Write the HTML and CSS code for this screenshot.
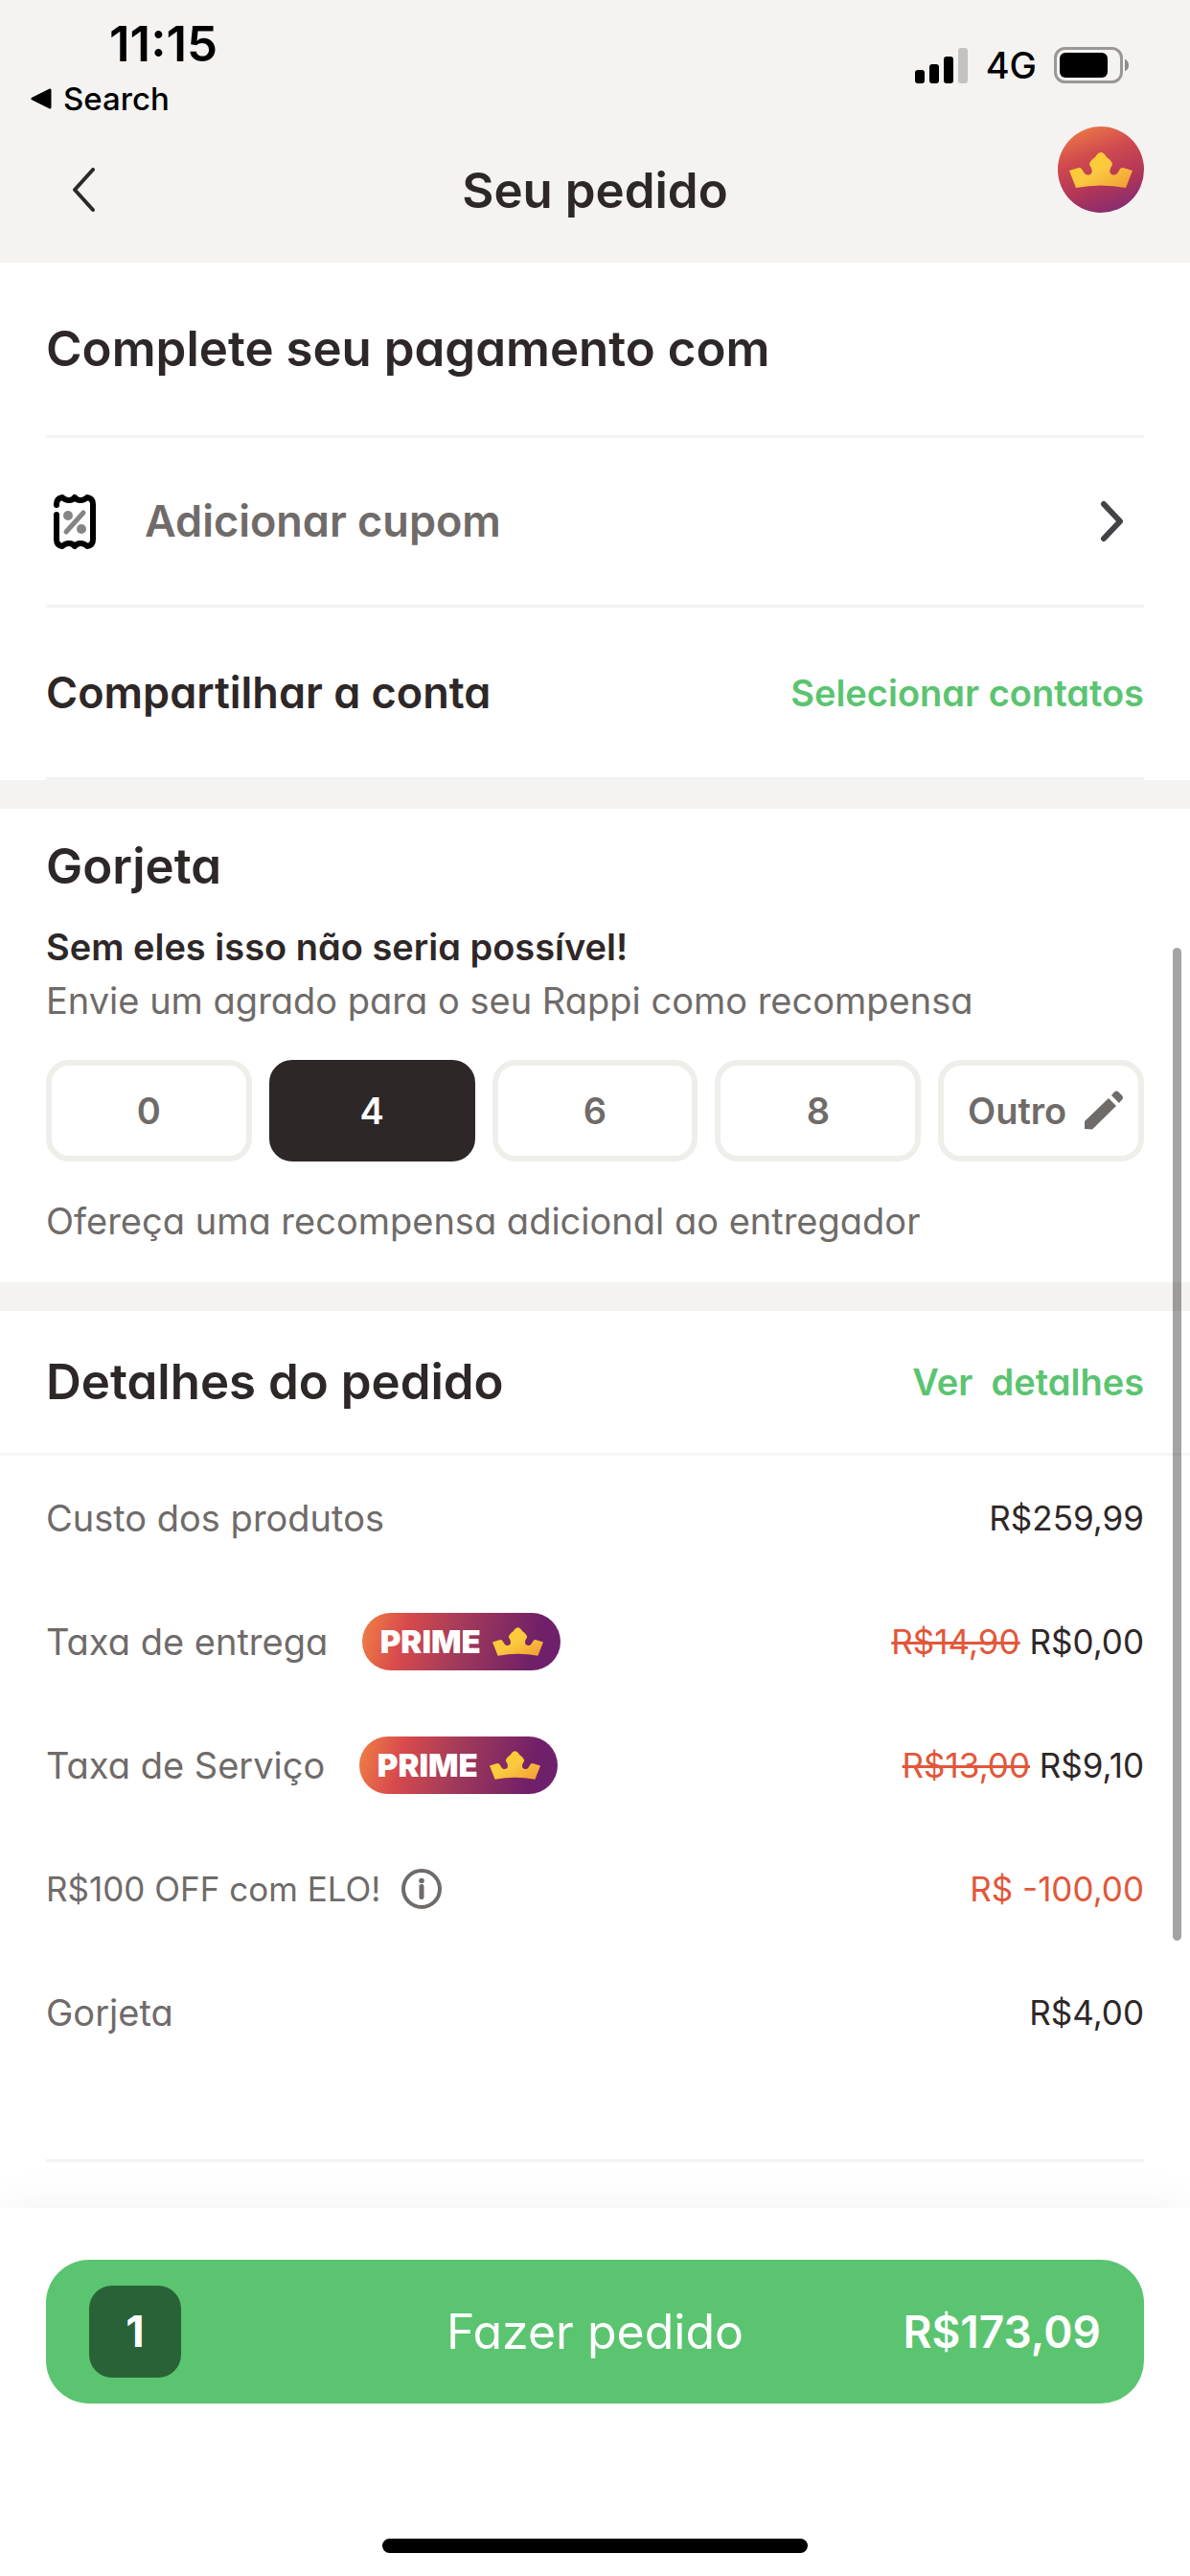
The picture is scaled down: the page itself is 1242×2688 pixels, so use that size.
FILE: index.html
```html
<!DOCTYPE html>
<html lang="pt-BR">
<head>
<meta charset="utf-8">
<meta name="viewport" content="width=device-width, initial-scale=1">
<title>Seu pedido</title>
<link rel="stylesheet" href="styles.css">
</head>
<body>
<svg class="defs" aria-hidden="true">
  <defs>
    <linearGradient id="gold" x1="0" y1="0" x2="1" y2="1">
      <stop offset="0" stop-color="#fdd02c"/>
      <stop offset="0.5" stop-color="#fbc83f"/>
      <stop offset="1" stop-color="#f09a35"/>
    </linearGradient>
    <symbol id="crown" viewBox="0 0 66 37">
      <path fill="url(#gold)" d="M0 19 10 16Q13 16 14 19 17 25 22 23 26 20 21 13 21 9 27 5 30 0 33 0 36 0 39 5 45 9 45 13 40 20 44 23 49 25 52 19 53 16 56 16L66 19 59 37Q33 32 7 37Z"/>
    </symbol>
  </defs>
</svg>

<header class="top">
  <div class="status">
    <div class="status-left">
      <span class="time">11:15</span>
      <a class="back-app" href="#">
        <svg width="22" height="22" viewBox="0 0 22 22" aria-hidden="true"><path d="M2 11 20 2v18z" stroke="#000" stroke-width="3" stroke-linejoin="round"/></svg>
        Search
      </a>
    </div>
    <div class="status-right">
      <svg width="56" height="37" viewBox="0 0 56 37" aria-hidden="true">
        <rect x="0" y="23" width="10" height="14" rx="3"/>
        <rect x="15" y="17" width="10" height="20" rx="3"/>
        <rect x="30" y="9" width="10" height="28" rx="3"/>
        <rect x="45" y="0" width="10" height="37" rx="3" fill="#c3c2c1"/>
      </svg>
      <span class="network">4G</span>
      <svg width="80" height="38" viewBox="0 0 80 38" aria-hidden="true">
        <rect x="1.5" y="1.5" width="69" height="35" rx="10" fill="none" stroke="#999897" stroke-width="3"/>
        <rect x="6" y="6" width="50" height="26" rx="6"/>
        <path d="M74 12.500q4 2 4 6.500t-4 6.500z" fill="#8c8b8a"/>
      </svg>
    </div>
  </div>
  <nav class="nav">
    <button class="icon-button" type="button" aria-label="Voltar">
      <svg width="30" height="48" viewBox="0 0 30 48" aria-hidden="true"><path d="M25 2 6 23l19 21" fill="none" stroke="#2e2727" stroke-width="4" stroke-linecap="round" stroke-linejoin="round"/></svg>
    </button>
    <h1 class="heading">Seu pedido</h1>
    <a class="avatar" href="#" aria-label="Prime"><svg width="66" height="37" aria-hidden="true"><use href="#crown"/></svg></a>
  </nav>
</header>

<main class="content">
  <section class="panel payment">
    <h2 class="heading payment-row payment-title">Complete seu pagamento com</h2>
    <button class="payment-row coupon" type="button">
      <svg width="60" height="60" viewBox="0 0 60 60" aria-hidden="true">
        <path d="M11 13V12Q11 6 17 5 20 8 24 8 28 8 30 5 32 8 36 8 40 8 43 5 49 6 49 12V49Q49 55 43 56 40 53 36 53 32 53 30 56 28 53 24 53 20 53 17 56 11 55 11 49V23" fill="none" stroke="#000" stroke-width="6" stroke-linecap="round" stroke-linejoin="round"/>
        <path d="M21 41 39 21" stroke="#858585" stroke-width="5" stroke-linecap="round"/>
        <circle cx="23" cy="24" r="5" fill="#858585"/>
        <circle cx="37" cy="38" r="5" fill="#858585"/>
      </svg>
      <span class="coupon-label">Adicionar cupom</span>
      <svg width="26" height="44" viewBox="0 0 26 44" aria-hidden="true"><path d="M4 4 21 22 4 40" fill="none" stroke="#434347" stroke-width="6" stroke-linecap="round" stroke-linejoin="round"/></svg>
    </button>
    <div class="payment-row">
      <h3 class="subheading">Compartilhar a conta</h3>
      <a class="link" href="#">Selecionar contatos</a>
    </div>
  </section>

  <section class="panel tips">
    <h2 class="heading">Gorjeta</h2>
    <p class="lead">Sem eles isso não seria possível!</p>
    <p class="note">Envie um agrado para o seu Rappi como recompensa</p>
    <div class="tip-options">
      <button class="tip" type="button">0</button>
      <button class="tip tip-selected" type="button" aria-pressed="true">4</button>
      <button class="tip" type="button">6</button>
      <button class="tip" type="button">8</button>
      <button class="tip tip-other" type="button">Outro
        <svg width="42" height="42" viewBox="0 0 42 42" aria-hidden="true"><path fill="#6f6b69" d="M1 40V32L26 8l8 8L9 40.500zM29 5l3-3.500q2.500-2 5 .5l3 3q2 2.500 0 4.500L37 13z"/></svg>
      </button>
    </div>
    <p class="note">Ofereça uma recompensa adicional ao entregador</p>
  </section>

  <section class="panel details">
    <div class="details-head">
      <h2 class="heading">Detalhes do pedido</h2>
      <a class="link" href="#">Ver&nbsp; detalhes</a>
    </div>
    <table class="costs">
      <tbody>
        <tr>
          <th scope="row">Custo dos produtos</th>
          <td>R$259,99</td>
        </tr>
        <tr>
          <th scope="row"><span class="cost-label">Taxa de entrega <span class="prime">PRIME<svg width="53" height="30" aria-hidden="true"><use href="#crown"/></svg></span></span></th>
          <td><del>R$14,90</del> R$0,00</td>
        </tr>
        <tr>
          <th scope="row"><span class="cost-label">Taxa de Serviço <span class="prime">PRIME<svg width="53" height="30" aria-hidden="true"><use href="#crown"/></svg></span></span></th>
          <td><del>R$13,00</del> R$9,10</td>
        </tr>
        <tr>
          <th scope="row"><span class="cost-label promo">R$100 OFF com ELO!
            <button class="icon-button" type="button" aria-label="Informações">
              <svg width="42" height="42" viewBox="0 0 42 42" aria-hidden="true"><circle cx="21" cy="21" r="19" fill="none" stroke="#6f6b69" stroke-width="4"/><path d="M21 18.500v11" stroke="#6f6b69" stroke-width="5" stroke-linecap="round"/><circle cx="21" cy="12.500" r="2.800" fill="#6f6b69"/></svg>
            </button></span></th>
          <td class="discount">R$ -100,00</td>
        </tr>
        <tr>
          <th scope="row">Gorjeta</th>
          <td>R$4,00</td>
        </tr>
      </tbody>
    </table>
  </section>
  <div class="scroll-thumb"></div>
</main>

<footer class="checkout">
  <button class="order" type="button">
    <span class="order-count">1</span>
    <span class="order-label">Fazer pedido</span>
    <span class="order-total">R$173,09</span>
  </button>
  <div class="home-bar"></div>
</footer>
</body>
</html>
```

FILE: styles.css
```css
:root {
  --ink: #2e2727;
  --muted: #6f6b69;
  --green: #5bc470;
  --band: #f4f3f1;
  --line: #f3f3f3;
  --gutter: 48px;
}

* {
  box-sizing: border-box;
}

body {
  margin: 0;
  min-height: 100vh;
  display: flex;
  flex-direction: column;
  background: #fff;
  color: var(--ink);
  font-family: Inter, "Open Sans", sans-serif;
  font-size: 38px;
  line-height: 56px;
}

h1, h2, h3, p {
  margin: 0;
}

button {
  font: inherit;
  color: inherit;
  border: 0;
  padding: 0;
  background: none;
}

a {
  color: inherit;
  text-decoration: none;
}

svg {
  display: block;
  flex: none;
}

.defs {
  position: absolute;
  width: 0;
  height: 0;
}

.heading {
  font-size: 51px;
  line-height: 64px;
  font-weight: 600;
}

.subheading {
  font-size: 45px;
  font-weight: 600;
}

.link {
  color: var(--green);
  font-weight: 600;
}

.nav, .content, .order {
  font-feature-settings: "cv11";
}

/* Status bar and navigation */
.top {
  padding-bottom: 8px;
  background: var(--band);
}

.status {
  display: flex;
  justify-content: space-between;
  min-height: 132px;
  padding: 18px 62px 0 32px;
  color: #000;
}

.status-left {
  display: flex;
  flex-direction: column;
  gap: 8px;
}

.time {
  padding-left: 82px;
  font-size: 51px;
  font-weight: 600;
}

.back-app {
  display: flex;
  align-items: center;
  gap: 12px;
  font-size: 33px;
  line-height: 42px;
  font-weight: 500;
}

.status-right {
  display: flex;
  align-items: center;
  gap: 18px;
  height: 100px;
}

.network {
  font-size: 38px;
  font-weight: 500;
}

.nav {
  display: grid;
  grid-template-columns: 1fr auto 1fr;
  align-items: center;
  height: 134px;
  padding: 0 var(--gutter);
}

.nav .icon-button {
  justify-self: start;
  padding-left: 24px;
}

.avatar {
  display: grid;
  place-items: center;
  justify-self: end;
  align-self: start;
  width: 90px;
  height: 90px;
  border-radius: 50%;
  background: linear-gradient(160deg, #ee7c45 5%, #d04a4e 35%, #b03558 65%, #7a2a78 98%);
}

/* Sections */
.content {
  position: relative;
  flex: 1;
  display: flex;
  flex-direction: column;
  gap: 30px;
  background: var(--band);
}

.panel {
  background: #fff;
}

.payment {
  padding: 0 var(--gutter);
}

.payment-row {
  display: flex;
  align-items: center;
  justify-content: space-between;
  width: 100%;
  height: 180px;
  border-bottom: 3px solid var(--line);
}

.payment-title {
  height: 183px;
}

.coupon {
  gap: 43px;
  height: 177px;
  padding-right: 20px;
  text-align: left;
}

.coupon-label {
  flex: 1;
  color: var(--muted);
  font-size: 45px;
  font-weight: 600;
}

.tips {
  padding: 28px var(--gutter) 36px;
}

.lead {
  margin-top: 24px;
  font-weight: 600;
}

.note {
  color: var(--muted);
}

.tip-options {
  display: grid;
  grid-template-columns: repeat(5, 1fr);
  gap: 18px;
  margin: 34px 0;
}

.tip {
  display: flex;
  align-items: center;
  justify-content: center;
  height: 106px;
  border: 6px solid #eeeeea;
  border-radius: 24px;
  color: var(--muted);
  font-weight: 600;
}

.tip-selected {
  border-color: var(--ink);
  background: var(--ink);
  color: #fff;
}

.tip-other {
  gap: 18px;
  padding-left: 10px;
}

.details {
  flex: 1;
  padding-bottom: 47px;
}

.details-head {
  display: flex;
  align-items: center;
  justify-content: space-between;
  height: 151px;
  padding: 0 var(--gutter);
  border-bottom: 3px solid #f6f6f6;
}

.costs {
  width: calc(100% - 2 * var(--gutter));
  margin: 0 var(--gutter);
  padding-bottom: 89px;
  border-spacing: 0;
  border-bottom: 3px solid var(--line);
}

.costs tr {
  height: 129px;
}

.costs th {
  padding: 0;
  color: var(--muted);
  font-weight: 400;
  text-align: left;
}

.costs td {
  padding: 0;
  font-size: 35px;
  text-align: right;
}

.costs del, .discount {
  color: #e2573a;
}

.cost-label {
  display: flex;
  align-items: center;
  gap: 36px;
}

.promo {
  gap: 22px;
  font-size: 35px;
}

.prime {
  display: flex;
  align-items: center;
  justify-content: center;
  gap: 12px;
  width: 207px;
  height: 60px;
  border-radius: 30px;
  background: linear-gradient(105deg, #ee7c45 2%, #d84a4c 22%, #a33b5a 48%, #712068 85%, #6d2070 100%);
  color: #fff;
  font-size: 33px;
  font-weight: 900;
}

.scroll-thumb {
  position: absolute;
  top: 715px;
  right: 9px;
  width: 9px;
  height: 1036px;
  border-radius: 5px;
  background: rgba(0, 0, 0, 0.36);
}

/* Checkout bar */
.checkout {
  position: sticky;
  bottom: 0;
  display: flex;
  flex-direction: column;
  gap: 141px;
  padding: 54px var(--gutter) 24px;
  background: #fff;
  box-shadow: 0 0 48px rgba(0, 0, 0, 0.06);
}

.order {
  display: grid;
  grid-template-columns: 1fr auto 1fr;
  align-items: center;
  height: 150px;
  padding: 0 45px;
  border-radius: 45px;
  background: var(--green);
  color: #fff;
}

.order-count {
  display: grid;
  place-items: center;
  width: 96px;
  height: 96px;
  border-radius: 24px;
  background: #2a6238;
  font-size: 45px;
  font-weight: 700;
}

.order-label {
  font-size: 50px;
}

.order-total {
  justify-self: end;
  font-size: 46px;
  font-weight: 600;
}

.home-bar {
  align-self: center;
  width: 444px;
  max-width: 100%;
  height: 15px;
  border-radius: 8px;
  background: #000;
}
```
